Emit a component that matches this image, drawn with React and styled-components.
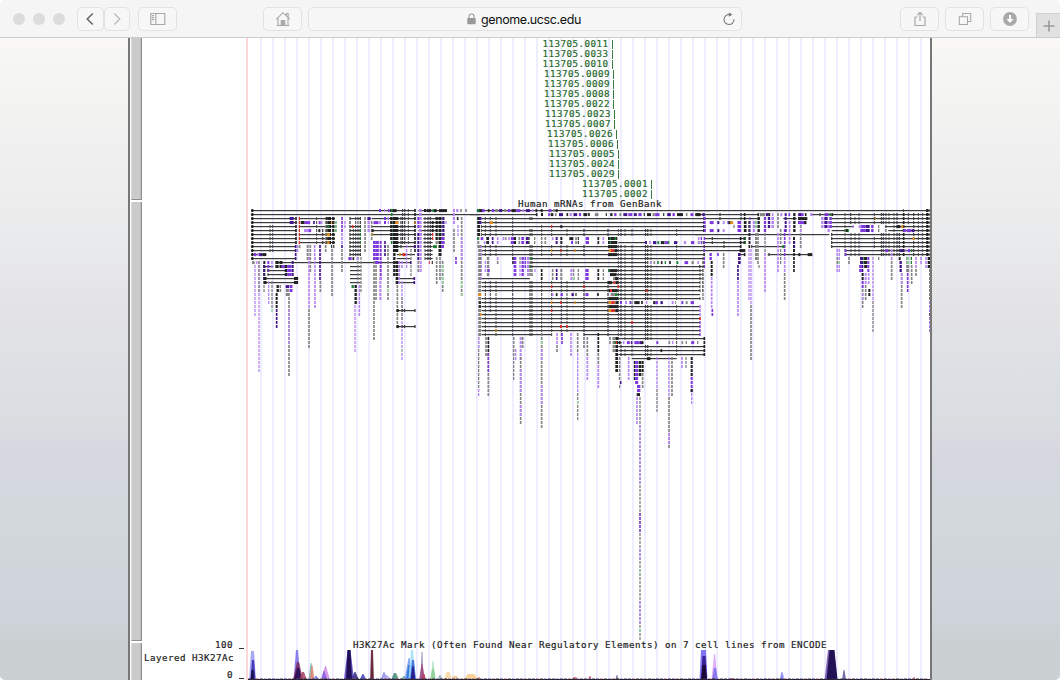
import React from "react";
import styled, { createGlobalStyle } from "styled-components";

const Global = createGlobalStyle`
  * { box-sizing: border-box; }
  html, body { margin: 0; background: #fff; overflow: hidden; }
`;

const Window = styled.div`
  width: 1060px;
  height: 680px;
  display: flex;
  flex-direction: column;
  overflow: hidden;
  border-radius: 5px;
  background: #f5f5f5;
`;

const Toolbar = styled.header`
  height: 38px;
  flex: none;
  display: flex;
  align-items: flex-start;
  padding: 7px 0 0 13px;
  background: #f5f5f5;
  border-bottom: 1px solid #cbcbcb;
`;

const Lights = styled.div`
  display: flex;
  gap: 8px;
  padding-top: 6px;
  margin-right: 12px;
`;

const Light = styled.i`
  width: 12px;
  height: 12px;
  border-radius: 50%;
  background: #dcdcdc;
`;

const ToolButton = styled.button`
  width: ${(p) => p.$w || 39}px;
  height: 24px;
  flex: none;
  margin: 0 0 0 ${(p) => p.$gap || 0}px;
  padding: 0;
  display: flex;
  align-items: center;
  justify-content: center;
  background: #f7f7f7;
  border: 1px solid #e2e2e2;
  border-radius: 5px;
  color: ${(p) => p.$ink || "#a9a9a9"};
`;

const Address = styled.div`
  width: 434px;
  height: 24px;
  flex: none;
  margin-left: 6px;
  display: flex;
  align-items: center;
  padding: 0 5px 0 158px;
  background: #f7f7f7;
  border: 1px solid #e2e2e2;
  border-radius: 5px;
  color: #111;
  font: 12.5px "Inter", "Liberation Sans", sans-serif;
`;

const Host = styled.span`
  flex: 1;
  margin-left: 5px;
  letter-spacing: -0.4px;
`;

const NewTab = styled.div`
  width: 24px;
  height: 24px;
  margin: 6px 0 0 7px;
  display: flex;
  align-items: center;
  justify-content: center;
  background: #e1e1e1;
  border: 1px solid #cfcfcf;
  border-right: 0;
  border-bottom: 0;
  color: #999;
`;

const Page = styled.main`
  flex: 1;
  min-height: 0;
  display: flex;
  padding-left: 128px;
  background: linear-gradient(
    #f9f8f5, #f4f4f2 8%, #eeeeef 22%, #e9eaeb 32%, #e2e2e5 44%, #dce0e4 53%,
    #dadde0 60%, #d6d7e0 65%, #d4d8df 70%, #d2d8db 75%, #d0d4db 86%, #ced2d9 91%, #cbd0d3 94%, #cbd0d3
  );
`;

const Sheet = styled.section`
  width: 804px;
  display: flex;
  background: #fff;
  border: solid #777;
  border-width: 0 2px;
  padding-left: 1px;
  overflow: hidden;
`;

const Handles = styled.div`
  width: 11px;
  display: flex;
  flex-direction: column;
  gap: 2px;
`;

const Handle = styled.div`
  height: ${(p) => p.$h}px;
  flex: none;
  background: #cbcbcb;
  border: solid #8f8f8f;
  border-width: 0 1px 1px 0;
  border-left: 1px solid #d9d9d9;
  box-shadow: inset -1px 0 #bdbdbd;
`;

const bitmapFont = `
  font-family: "DejaVu Sans Mono", monospace;
  font-size: 9.2px;
  letter-spacing: 0.47px;
  -webkit-text-stroke: 0.2px currentColor;
  line-height: 10px;
  white-space: pre;
`;

const Labels = styled.div`
  width: 104px;
  padding-top: 602px;
  display: flex;
  flex-direction: column;
  color: #222;
`;

const AxisLabel = styled.div`
  ${bitmapFont}
  height: ${(p) => p.$h}px;
  display: flex;
  justify-content: flex-end;
  padding-right: ${(p) => (p.$tick ? 1 : 12)}px;
`;

const Tick = styled.i`
  width: 5px;
  height: 1.4px;
  margin: 8px 1px 0 6px;
  background: #333;
`;

const Plot = styled.div`
  flex: 1;
  min-width: 0;
  background: repeating-linear-gradient(90deg, #efeeff 0 2px, transparent 2px 12px) 14px 0 / 100% 100% no-repeat;
  border-left: 2px solid #ffd9d9;
  background-origin: border-box;
`;

const Variants = styled.div`
  padding-top: 1px;
`;

const Variant = styled.div`
  ${bitmapFont}
  height: 10px;
  display: flex;
  padding-left: ${(p) => p.$x - 248}px;
  color: #26682b;
`;

const VariantId = styled.span`
  width: 69px;
  flex: none;
`;

const VariantMark = styled.i`
  width: 1.3px;
  height: 9px;
  margin-top: 1px;
  background: #397a3e;
`;

const TrackTitle = styled.div`
  ${bitmapFont}
  height: 10px;
  padding-left: ${(p) => p.$x - 248}px;
  color: #222;
`;

const Drawing = styled.svg`
  display: block;
`;

const variants = [
  ["0011", 542.5], ["0033", 542.5], ["0010", 542.5], ["0009", 544], ["0009", 544],
  ["0008", 544], ["0022", 544], ["0023", 545], ["0007", 545], ["0026", 547],
  ["0006", 548], ["0005", 549], ["0024", 549], ["0029", 549], ["0001", 582], ["0002", 582],
];

const ink = {
  k: "#222", g: "#858585", p: "#7f38dc", l: "#b686f2", d: "#42178c",
  r: "#d8312a", o: "#e08f1e", n: "#238238", m: "#91cf98", j: "#3c3c3c",
};

/* Each region keeps three units per pixel. Lines: "row x1 x2"; blocks: "x firstRow lastRow ink width".
   Ink "j" is a pair of narrow exons. */
const regions = [
  {
    x: 240,
    lines: `0 33 525,1 33 720,2 33 165,3 33 165,4 33 168,5 33 168,6 33 168,7 33 168,8 33 168,9 33 168,10 33 168,11 33 70,12 33 168,13 108 513,
      2 178 285,4 178 285,6 178 285,7 178 285,8 178 285,2 330 362,4 330 362,5 330 362,6 330 362,7 330 362,8 330 362,9 330 362,10 330 362,11 330 362,
      14 330 362,15 330 362,16 330 362,17 330 362,18 330 362,2 395 525,4 395 525,5 395 525,6 395 525,8 460 525,9 460 525,11 470 525,12 470 512,
      17 470 525,18 470 525,25 470 525,29 470 525,0 535 618,2 550 605,3 550 605,4 550 605,5 535 590,6 550 578,7 550 578,8 550 578,9 550 578,10 555 578,11 555 578,12 555 578,
      15 83 138,16 83 138,17 75 175,18 75 175,14 75 100`,
    blocks: `37 0 12 k 6,90 4 10 k 3,98 4 10 k 3,155 2 3 d 12,168 2 8 k 5,167 9 12 d 5,178 2 8 r 4,179 9 9 g 5,173 9 10 l 4,
      188 3 3 k 12,202 3 3 p 17,200 5 5 l 16,210 5 5 p 7,230 2 8 k 3,222 3 3 d 5,239 3 3 p 6,245 3 3 l 5,238 5 5 k 6,248 5 8 k 4,260 2 8 k 6,268 2 8 k 10,265 4 4 n 6,277 3 3 o 7,265 6 6 o 10,265 8 8 o 7,280 2 8 k 7,285 4 5 m 3,278 9 9 j 10,
      203 9 12 g 6,211 9 15 g 5,224 9 11 l 5,240 9 17 d 5,288 3 5 n 3,
      306 2 5 p 5,306 9 9 d 5,315 3 4 l 4,306 6 8 l 5,306 10 15 g 5,330 2 11 k 4,338 4 4 r 5,340 5 11 k 3,347 2 11 k 3,354 2 11 k 3,361 2 11 k 4,361 5 8 n 3,375 2 10 g 5,387 2 2 d 10,386 3 5 l 7,395 3 7 g 5,408 3 3 p 15,420 3 3 l 5,435 2 3 p 6,445 2 3 l 4,
      402 8 12 p 6,411 8 13 p 11,422 8 17 p 6,435 8 11 d 5,398 5 5 k 6,398 6 6 o 3,420 0 0 p 6,434 0 0 l 4,446 0 0 p 5,460 0 0 k 20,455 0 8 n 5,454 2 7 k 7,467 2 10 k 16,470 3 3 o 9,463 11 16 k 7,471 13 18 k 8,483 2 9 k 4,491 0 8 j 10,505 0 8 k 3,525 0 10 k 5,524 9 9 d 5,525 3 3 o 4,492 11 11 r 9,480 11 11 o 4,
      535 2 4 p 6,541 0 6 l 8,555 0 0 k 6,563 0 0 k 7,570 0 0 k 7,580 0 0 n 6,586 0 0 k 8,609 0 0 k 24,555 2 12 k 3,564 2 12 k 4,571 2 12 k 4,578 3 5 k 6,578 6 7 r 4,590 2 7 k 7,600 2 11 k 9,610 2 8 d 7,618 3 3 l 4,585 9 9 n 12,600 9 11 k 6,608 7 9 p 8,590 8 8 g 7,
      535 6 12 d 6,535 13 15 g 5,542 6 15 l 6,513 10 16 g 4,500 9 14 l 4,486 13 14 l 5,512 13 13 d 4,568 13 13 r 3,577 13 13 k 4,
      40 13 13 g 8,50 13 13 l 5,57 13 13 g 5,45 11 11 p 7,54 11 11 l 6,62 11 11 d 9,73 11 11 k 12,
      73 13 18 k 6,72 14 17 d 5,85 13 15 p 6,96 13 14 l 5,111 13 14 k 10,123 13 14 k 9,130 14 14 p 12,84 15 16 k 3,138 14 16 k 7,148 14 16 p 13,158 13 16 d 6,76 17 18 k 7,168 17 18 k 12,113 19 20 k 7,121 19 20 g 5,142 19 19 d 10,153 19 20 p 9,142 20 21 g 9,
      45 14 26 l 4,57 14 40 l 4,57 14 20 g 4,86 18 23 l 4,96 18 24 g 4,96 25 25 m 4,110 21 24 k 6,110 25 29 d 5,147 21 41 g 5,147 25 33 l 4,72 19 20 g 4,
      207 12 24 l 5,207 25 34 g 5,225 12 24 l 5,241 18 20 g 5,257 3 10 g 5,276 10 21 g 5,347 19 23 k 7,354 12 18 g 4,338 19 19 n 7,345 24 35 l 4,358 19 26 l 5,363 12 20 g 4,330 12 12 p 10,340 12 12 k 5,352 12 12 l 5,
      402 13 32 g 5,408 14 22 g 5,421 17 22 l 6,444 9 19 g 5,444 20 20 m 5,444 21 22 g 5,472 19 29 g 5,478 13 18 l 5,486 18 37 l 4,486 22 27 g 4,486 35 35 m 4,473 25 25 k 7,490 25 25 j 11,525 25 25 k 4,473 29 29 k 7,490 29 29 j 11,525 29 29 k 4,523 17 18 d 5,
      590 12 18 g 5,600 12 17 g 5,608 13 20 g 5,608 14 15 m 5,608 17 18 m 5,642 0 3 l 6,652 0 0 l 7,663 0 0 g 5,678 0 0 g 5,642 5 10 g 5,648 12 13 p 5,653 2 2 k 5,654 4 6 l 4,665 2 21 g 5,665 7 12 l 5,665 18 19 m 5,665 21 21 m 5,715 0 0 k 8,715 2 3 n 6,715 4 9 g 6`,
  },
  {
    x: 470,
    lines: `0 20 720,1 0 200,2 35 703,3 35 703,4 35 703,5 35 703,6 35 703,8 445 530,9 35 703,10 35 703,11 35 703,12 180 703,13 180 530,14 180 703,15 440 695,16 440 695,17 35 180,17 440 695,18 35 690,19 35 690,20 35 690,21 440 690,22 35 690,23 35 415,24 35 690,25 35 690,26 35 690,27 35 690,28 35 690,29 35 690,30 35 690,31 35 245,31 342 690,32 440 703,33 440 455,34 445 703,35 445 703,36 445 703,37 485 620`,
    blocks: `25 0 0 n 7,32 0 0 k 8,40 0 0 p 8,56 0 0 k 5,69 0 0 p 7,80 0 0 g 8,92 0 0 d 9,105 0 0 g 6,117 0 0 p 8,131 0 0 k 13,145 0 0 p 12,160 0 0 l 5,174 0 0 d 12,188 0 0 l 5,199 0 0 k 5,215 0 0 k 6,240 0 0 p 9,252 0 0 g 5,260 0 0 k 6,
      200 1 1 k 5,216 1 1 k 6,237 1 1 p 5,246 1 1 k 8,257 1 1 g 5,273 1 1 d 12,292 1 1 k 5,302 1 1 l 7,316 1 1 d 11,330 1 1 p 7,346 1 1 k 12,357 1 1 k 5,380 1 1 g 11,409 1 1 k 4,424 1 1 k 7,436 1 1 p 7,451 1 1 g 6,466 1 1 d 12,481 1 1 p 12,496 1 1 d 9,510 1 1 p 10,523 1 1 k 4,537 1 1 k 12,551 1 1 g 7,562 1 1 p 13,581 1 1 k 4,597 1 1 d 11,611 1 1 p 7,630 1 1 k 18,650 1 1 g 5,666 1 1 p 9,682 1 1 k 12,700 1 1 g 5,
      26 2 6 k 8,31 2 3 d 7,34 4 6 k 3,46 2 6 k 3,61 2 6 k 3,64 3 3 o 10,78 2 6 k 3,128 2 6 k 3,183 2 2 j 9,183 5 6 j 9,245 4 4 r 4,274 4 4 k 6,215 4 6 k 3,245 5 6 k 3,291 5 6 k 3,342 5 6 k 4,414 5 6 k 4,445 5 6 k 3,453 5 6 k 4,465 5 6 k 3,486 5 6 k 3,530 5 6 j 10,543 5 6 k 3,620 5 6 k 3,703 2 5 d 6,703 4 5 k 6,
      24 7 7 n 5,36 7 7 p 8,53 7 8 k 8,44 8 8 l 5,68 7 8 d 5,83 7 8 l 5,100 7 7 l 5,107 7 7 g 5,117 7 7 l 5,128 7 8 p 11,135 7 8 k 6,148 7 8 g 5,158 7 8 p 8,172 7 8 d 9,177 7 8 k 4,194 7 8 g 4,215 7 8 g 5,226 7 8 g 5,248 7 7 l 5,260 7 8 d 6,274 7 8 k 6,304 7 7 k 12,306 8 8 p 6,318 7 8 g 5,325 7 8 k 4,352 7 8 p 10,385 7 8 k 5,400 7 8 l 5,428 7 8 k 28,421 7 8 n 4,436 7 7 n 5,528 8 8 d 6,540 8 8 l 5,554 8 8 d 10,565 8 8 n 6,578 8 8 k 11,590 8 8 p 12,596 8 8 n 4,617 8 8 d 10,645 8 8 l 7,668 8 8 p 10,686 8 8 n 5,700 8 8 k 4,
      29 9 31 g 9,34 9 17 l 3,46 9 11 k 3,61 9 11 k 3,78 9 11 k 3,128 9 11 k 3,183 9 16 j 9,215 9 11 k 3,245 9 11 k 3,245 10 10 o 4,273 9 11 k 3,273 10 10 r 4,291 9 11 k 3,315 10 10 o 4,342 9 11 k 4,428 9 9 k 28,420 10 10 o 7,428 10 10 r 10,438 10 10 k 9,428 11 11 k 28,
      445 9 32 k 3,453 9 31 k 4,465 9 22 k 3,486 9 32 k 3,530 9 22 j 10,543 9 22 k 3,620 9 12 k 3,620 14 22 k 3,703 9 14 p 4,703 10 11 k 4,690 15 20 k 3,698 15 20 g 3,690 22 22 k 3,703 32 36 k 5,
      30 12 16 g 7,46 13 15 l 4,54 12 16 g 7,56 15 15 p 6,83 12 12 l 5,83 13 13 g 5,129 12 13 k 5,135 12 16 p 8,150 12 13 g 4,150 14 16 l 4,158 12 16 p 7,166 12 14 p 5,174 12 16 l 6,183 12 12 n 5,180 14 14 n 4,195 15 15 l 4,
      542 13 13 l 5,553 13 13 g 5,564 13 13 n 5,575 13 13 k 5,586 13 13 n 4,600 13 13 k 5,622 13 13 n 6,649 13 13 p 11,668 13 13 g 7,685 13 13 g 4,700 13 13 g 4,
      215 15 17 k 5,248 15 17 g 5,260 15 17 d 5,274 15 17 g 6,304 15 17 l 6,311 15 17 g 4,311 17 17 m 6,325 15 17 g 4,351 15 17 p 10,385 15 17 k 5,400 15 17 g 4,416 15 15 n 4,430 15 15 k 24,430 16 16 k 20,438 17 17 g 18,440 17 17 k 9,
      46 18 31 k 3,61 18 25 k 3,78 18 31 k 3,128 18 31 k 3,183 18 31 j 9,215 18 31 k 3,245 18 31 k 3,245 19 19 r 4,291 18 30 k 3,342 18 31 k 4,342 19 19 r 4,414 18 31 k 4,274 18 20 k 3,274 22 31 k 3,420 18 18 k 13,433 18 18 r 6,441 18 18 k 8,445 19 19 r 5,430 20 20 k 27,423 20 20 r 6,530 20 20 r 5,428 21 21 g 12,438 21 21 n 8,430 22 22 k 28,
      248 21 21 l 5,260 21 21 k 5,275 21 21 p 7,308 21 21 d 7,318 21 21 k 4,351 21 21 p 9,384 21 21 k 5,29 21 21 o 9,
      245 23 23 o 4,273 23 23 r 5,315 23 23 o 4,420 23 23 o 8,429 23 23 r 11,440 23 23 k 8,430 24 24 k 28,420 25 25 o 8,429 25 25 r 11,440 25 25 k 8,30 23 24 k 5,32 26 26 o 4,78 30 30 o 4,245 25 25 r 4,273 29 29 r 6,291 29 29 r 5,486 28 28 r 5,690 27 27 r 5,690 24 26 l 5,690 28 31 p 4,
      453 23 23 p 6,468 23 23 l 6,481 23 23 p 5,501 23 23 k 16,516 23 23 k 5,530 23 23 l 4,553 23 23 k 7,560 23 23 p 8,575 23 23 d 7,608 23 23 l 6,617 23 23 g 3,637 23 23 p 6,650 23 23 g 6,667 23 23 p 10,
      465 24 32 k 3,530 24 32 j 10,543 24 32 k 3,620 24 36 k 3,486 34 36 k 3,465 35 36 k 3,530 34 36 j 10,543 35 36 k 3,574 35 35 k 5,453 34 36 k 4,536 37 37 k 11,
      420 32 33 g 5,431 32 35 g 7,440 32 40 k 8,439 33 33 r 4,435 33 33 n 4,449 33 33 k 6,461 33 33 l 5,475 33 33 p 9,485 33 33 d 5,500 33 33 p 14,512 33 33 d 8,518 33 33 k 5,562 33 33 p 6,598 33 33 g 5,608 33 33 l 4,637 33 33 g 5,649 33 33 g 4,668 33 33 p 9,683 33 33 g 4,
      26 32 44 g 4,26 45 46 l 4,26 32 34 l 4,48 32 36 g 5,55 32 36 k 5,55 37 46 g 5,55 36 40 p 4,131 32 36 g 5,131 37 42 g 4,137 35 37 l 4,152 32 37 l 6,158 32 34 g 5,152 37 53 g 5,152 40 45 l 5,152 49 51 l 5,215 31 54 g 5,215 33 33 m 5,215 35 37 l 5,215 44 48 l 5,261 31 33 l 5,261 34 35 g 5,276 31 33 p 5,303 31 36 l 5,323 31 35 g 5,323 36 45 l 4,323 46 52 g 4,323 48 48 m 4,342 32 34 g 5,352 32 36 g 5,352 37 42 l 5,385 31 35 k 5,385 36 38 g 5,385 39 44 l 5,
      449 37 42 g 5,452 43 43 d 5,449 44 44 g 4,476 37 42 l 5,494 38 42 k 5,500 38 43 p 9,510 38 41 k 8,518 38 40 k 6,518 41 44 g 5,506 44 45 p 10,505 46 46 k 10,501 47 53 l 5,510 47 107 g 4,510 54 68 l 4,510 76 80 p 4,510 85 87 l 4,510 90 90 m 4,510 98 103 l 4,510 105 105 m 4,
      561 37 44 l 4,561 45 50 g 4,597 37 46 l 4,597 47 59 g 5,597 56 58 l 5,606 37 46 g 5,636 37 39 l 5,648 37 39 g 4,665 37 41 k 6,665 42 45 p 6,665 45 45 k 6,665 46 48 l 4`,
  },
  {
    x: 695,
    lines: `0 0 705,1 0 190,1 350 705,2 30 195,2 265 305,2 410 705,3 410 705,4 410 475,4 570 705,5 410 460,5 580 705,6 0 403,6 410 705,7 30 150,8 30 150,9 30 135,10 30 145,7 410 705,8 410 705,9 410 705,9 170 265,10 450 705,11 130 150,11 218 350,11 450 705`,
    blocks: `11 1 1 k 12,26 1 1 d 7,29 2 5 p 4,28 7 10 p 4,28 9 9 k 3,75 1 2 k 4,138 1 2 k 4,149 1 5 k 5,190 1 1 k 5,203 1 1 g 16,217 1 1 d 8,223 1 1 k 5,233 1 1 l 5,249 1 4 g 5,259 1 1 l 6,272 1 1 d 6,283 1 1 p 5,298 1 1 k 7,314 1 1 d 9,322 1 1 p 8,332 1 1 k 5,349 1 1 l 7,375 1 1 k 4,395 1 1 p 12,406 1 2 n 5,412 1 1 k 5,
      50 3 3 p 12,50 5 5 p 12,70 3 3 d 6,70 5 5 d 6,86 3 3 l 6,86 5 5 l 6,103 3 3 k 9,110 3 3 o 9,98 3 3 l 4,117 4 4 g 4,133 3 5 p 11,152 3 5 k 5,163 3 5 k 6,165 2 8 p 3,177 3 5 l 7,183 3 4 m 7,191 2 5 k 7,210 2 5 p 7,222 2 4 d 7,233 2 4 l 8,272 2 5 d 6,284 3 8 l 5,298 2 5 k 7,314 2 3 p 10,323 2 2 k 28,321 3 3 p 22,331 3 3 k 7,317 4 9 g 5,317 5 5 l 4,382 2 4 l 7,393 2 4 d 10,401 3 5 l 7,407 2 4 p 7,410 6 9 k 4,
      52 7 8 k 4,87 8 9 k 4,137 7 10 k 5,149 7 8 k 7,150 7 8 n 3,138 10 10 k 8,146 10 10 k 10,133 11 13 d 8,149 11 11 k 5,163 6 9 k 5,162 10 22 l 4,168 10 23 l 4,170 9 9 k 3,183 6 12 g 6,189 6 13 g 5,192 14 14 g 4,210 6 10 g 4,210 11 20 l 5,249 6 9 l 5,249 10 15 l 5,257 5 8 g 5,257 10 13 g 4,269 5 11 p 5,269 12 15 l 5,269 16 22 g 5,297 7 10 k 6,297 11 15 k 5,298 8 9 d 5,265 9 9 n 6,222 11 11 k 4,313 11 11 k 6,345 11 11 k 14,
      11 7 8 l 5,19 7 8 p 4,27 11 11 k 4,10 13 13 l 4,24 12 22 k 3,14 14 14 k 4,47 11 12 p 7,50 13 16 k 6,50 17 24 l 5,52 25 26 p 5,69 11 11 p 5,86 11 14 g 5,129 14 17 d 5,129 18 26 l 5,168 24 37 g 5,
      450 1 11 k 3,467 1 3 k 4,468 6 11 k 3,480 2 3 k 3,480 6 11 k 3,492 1 3 k 3,492 6 11 k 3,504 4 5 p 16,518 4 5 d 12,495 4 4 l 8,540 2 2 o 5,538 1 3 k 3,538 7 9 k 3,456 5 5 n 11,456 5 5 k 5,475 4 4 l 4,532 4 5 p 7,551 4 5 g 4,
      562 1 3 j 9,562 6 11 j 9,573 1 11 k 3,582 1 3 k 3,582 6 11 k 3,597 1 11 k 3,606 1 3 k 4,610 4 4 k 12,606 6 11 k 4,613 6 11 k 4,625 0 0 k 3,626 1 11 k 5,622 4 4 o 6,640 1 3 k 3,629 5 5 p 8,642 5 5 p 13,656 1 11 k 4,656 7 7 o 6,654 5 5 d 8,670 1 11 k 3,683 1 11 k 3,697 0 11 k 7,705 0 11 k 3,
      427 10 11 l 5,427 12 13 g 5,427 14 15 l 5,433 10 15 l 4,433 13 13 m 4,452 10 11 p 5,462 12 13 g 5,575 10 10 p 8,590 10 10 l 6,620 10 10 d 10,632 10 10 l 5,642 10 10 p 7,650 10 10 n 4,
      500 12 15 d 10,508 12 13 n 6,512 12 14 k 9,520 12 15 p 6,497 14 15 p 9,503 16 17 k 6,503 18 19 p 6,512 16 18 l 6,521 16 18 l 5,503 20 24 g 5,512 19 22 g 5,523 20 21 k 6,534 12 22 l 4,534 23 30 g 4,503 21 22 l 4,551 12 12 g 4,590 11 12 l 5,590 13 17 g 5,614 12 12 k 6,617 13 15 d 7,620 16 24 g 5,620 16 18 l 5,638 12 15 g 9,639 12 13 m 7,649 12 13 n 4,650 14 18 g 5,638 16 20 p 5,663 12 14 l 5,663 15 16 g 5,678 12 13 l 5,693 12 14 l 5,702 12 14 k 8,705 15 22 k 4,705 23 30 p 4,705 26 26 k 4`,
  },
];

const ORIGIN_X = 248;

function blockPath(x, from, to, color, w) {
  const bars = color === "j" ? [[x - w / 2, w * 0.36], [x + w * 0.14, w * 0.36]] : [[x - w / 2, w]];
  let d = "";
  for (let row = from; row <= to; row++) {
    for (const [left, width] of bars) {
      d += `M${left / 3} ${row * 4 - 1.5}h${width / 3}v3h${-width / 3}z`;
    }
  }
  return d;
}

function MrnaTrack() {
  return (
    <Drawing width="682" height="431" viewBox="0 0 682 431">
      {regions.map((region) => (
        <g key={region.x} transform={`translate(${region.x - ORIGIN_X} 1.6)`}>
          {region.lines.split(",").map((entry, i) => {
            const [row, a, b] = entry.trim().split(" ").map(Number);
            return <rect key={i} x={a / 3} y={row * 4 - 0.6} width={(b - a) / 3} height="1.2" fill="#3a3a3a" />;
          })}
          {region.blocks.split(",").map((entry, i) => {
            const [x, from, to, color, w] = entry.trim().split(" ");
            const fill = color === "k" && +w < 5 ? "#444" : ink[color];
            return <path key={i} d={blockPath(+x, +from, +to, color, +w)} fill={fill} />;
          })}
        </g>
      ))}
    </Drawing>
  );
}

/* "center height baseWidth topWidth color" */
const peaks = `252.5 29 7 3 #9a9cf0,253 20 5 2 #3b2bb0,252.5 10 4 2 #180b40,
297 30 7 2 #7b6fe8,298 18 10 2 #7b2960,298 12 8 2 #240d55,303 8 8 2 #a44564,
311 17 5 1 #6dbcba,312 15 5 1 #e28774,316 4 5 2 #7784de,
325.5 14 9 1 #d289e4,324 9 6 1 #8460e0,
349 30 10 3 #5540c5,349 30 6 3 #160545,355 8 8 1 #382b83,363 6 7 1 #4444bc,
372 30 4 2 #663052,372 30 2 1 #682024,
384 8 7 1 #9490ec,386 5 11 2 #aaa7ee,395 7 8 2 #478b76,404 4 7 1 #6aa39b,
409 22 9 1 #739cf0,409 15 6 2 #3676d9,412 30 7 2 #a2dff8,413 20 6 2 #356bd8,413 14 5 1 #231080,
422 28 3 1 #9489b5,422 16 6 1 #9e4a82,424 6 4 1 #bc3846,433 19 4 1 #a0e1b5,433 11 6 2 #91cc98,
440 5 6 1 #9bb3b4,448 8 8 3 #f7d6a0,455 4 8 4 #efc48c,471 6 14 7 #f5cc8b,479 3 5 1 #d38170,
575 3 5 3 #d36983,590 4 3 1 #cc4465,617 5 3 1 #71779b,
703.5 30 8 5 #6e62ef,704 24 6 3 #2d168c,704 15 6 3 #190529,714.5 26 6 1 #dca3f7,715 12 6 2 #7d70ea,
782 8 5 1 #8585ed,731 2 7 3 #d76c8d,831 30 13 6 #7250aa,832 30 11 5 #160649,844 10 4 1 #62579c,914 3 3 1 #d56384`;

const floor = Array.from({ length: 170 }, (_, i) => ({
  x: i * 4,
  h: 1 + ((i * 7 + (i % 5) * 3) % 5) * 0.35,
  color: ["#35235e", "#6657bd", "#222", "#974663", "#35308f"][(i * 3 + (i % 7)) % 5],
}));

function SignalTrack() {
  return (
    <Drawing width="682" height="30" viewBox="0 0 682 30">
      {peaks.split(",").map((entry, i) => {
        const [center, h, base, top, color] = entry.trim().split(" ");
        const x = center - ORIGIN_X;
        return (
          <path
            key={i}
            d={`M${x - base / 2} 30L${x - top / 2} ${30 - h}h${top}L${x + base / 2} 30z`}
            fill={color}
            opacity="0.88"
          />
        );
      })}
      {floor.map((f) => (
        <rect key={f.x} x={f.x} y={29.3 - f.h} width="3" height={f.h} fill={f.color} opacity="0.65" />
      ))}
      <rect y="29" width="682" height="1" fill="#29242f" />
    </Drawing>
  );
}

const Icon = ({ w = 16, h = 16, sw = 1.2, children }) => (
  <svg width={w} height={h} viewBox={`0 0 ${w} ${h}`} fill="none" stroke="currentColor" strokeWidth={sw}>
    {children}
  </svg>
);

export default function App() {
  return (
    <Window>
      <Global />
      <Toolbar>
        <Lights><Light /><Light /><Light /></Lights>
        <ToolButton $w={27} $ink="#656565">
          <Icon w={12} h={14} sw={1.5}><path d="M7.8 1.5L2.2 7l5.6 5.5" /></Icon>
        </ToolButton>
        <ToolButton $w={26} $ink="#bdbdbd">
          <Icon w={12} h={14} sw={1.4}><path d="M3.2 1.5L8.8 7l-5.6 5.5" /></Icon>
        </ToolButton>
        <ToolButton $gap={8}>
          <Icon w={16} h={14}><path d="M.8 1.5h14v11h-14zM5.8 1.5v11M2 3.6h2M2 5.6h2M2 7.6h2" /></Icon>
        </ToolButton>
        <ToolButton $gap={86}>
          <Icon w={16} h={16} sw={1.1}>
            <path d="M1.2 8.3L8 1.7l6.8 6.6M3 7v7.5h10V7M11.5 5V2.5h1.7v4" />
            <path d="M1.8 14.5h12.4" />
            <path d="M6.2 14V9.5h3.6V14z" fill="currentColor" />
          </Icon>
        </ToolButton>
        <Address>
          <svg width="9" height="12" viewBox="0 0 9 12">
            <path d="M2 6V3.5a2.5 2.5 0 0 1 5 0V6" fill="none" stroke="#999" strokeWidth="1.1" />
            <rect x=".3" y="5" width="8.4" height="6.3" rx=".7" fill="#999" />
          </svg>
          <Host>genome.ucsc.edu</Host>
          <svg width="14" height="14" viewBox="0 0 14 14" fill="none" stroke="#777" strokeWidth="1.1">
            <path d="M7.8 2.6A5 5 0 1 0 12 7.3" />
            <path d="M6.8.4v4.4l3.7-2.2z" fill="#777" stroke="none" />
          </svg>
        </Address>
        <ToolButton $gap={158}>
          <Icon w={14} h={16}><path d="M4.5 6H2v8.5h10V6H9.5M7 10V1.4M4.2 4.2L7 1.4l2.8 2.8" /></Icon>
        </ToolButton>
        <ToolButton $gap={6}>
          <Icon w={14} h={14} sw={1.1}><path d="M1.3 4.7h8.2v7.8H1.3zM4.7 4.5V1.5h8v8h-3" /></Icon>
        </ToolButton>
        <ToolButton $gap={6}>
          <svg width="14" height="14" viewBox="0 0 14 14">
            <circle cx="7" cy="7" r="6.9" fill="#a9a9a9" />
            <path d="M6 3h2v4h2.6L7 11 3.4 7H6z" fill="#fff" />
          </svg>
        </ToolButton>
        <NewTab>
          <Icon w={12} h={12} sw={1.6}><path d="M6 .5v11M.5 6h11" /></Icon>
        </NewTab>
      </Toolbar>
      <Page>
        <Sheet>
          <Handles>
            <Handle $h={162} />
            <Handle $h={439} />
            <Handle $h={60} />
          </Handles>
          <Labels>
            <AxisLabel $h={13} $tick>100<Tick /></AxisLabel>
            <AxisLabel $h={17}>Layered H3K27Ac</AxisLabel>
            <AxisLabel $h={10} $tick>0<Tick /></AxisLabel>
          </Labels>
          <Plot>
            <Variants>
              {variants.map(([id, x], i) => (
                <Variant key={i} $x={x}>
                  <VariantId>113705.{id}</VariantId>
                  <VariantMark />
                </Variant>
              ))}
            </Variants>
            <TrackTitle $x={518}>Human mRNAs from GenBank</TrackTitle>
            <MrnaTrack />
            <TrackTitle $x={353}>
              H3K27Ac Mark (Often Found Near Regulatory Elements) on 7 cell lines from ENCODE
            </TrackTitle>
            <SignalTrack />
          </Plot>
        </Sheet>
      </Page>
    </Window>
  );
}
